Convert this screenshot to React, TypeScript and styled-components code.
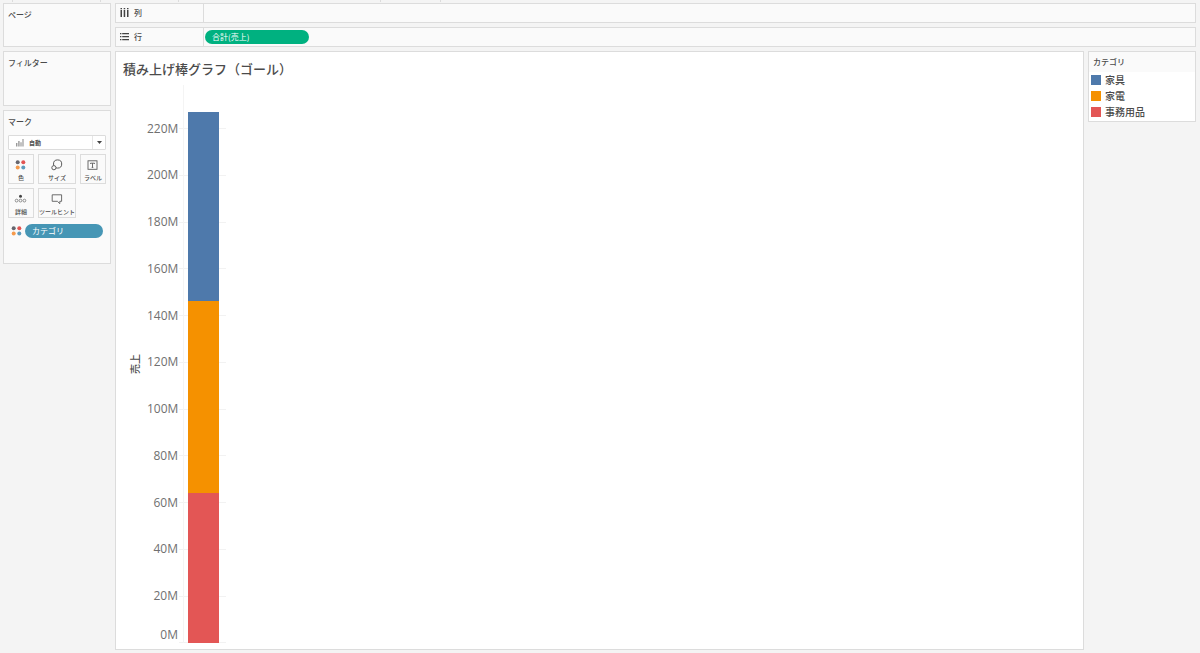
import React from 'react';
import styled, { createGlobalStyle } from 'styled-components';

const line = '#dcdcdc';
const panelBg = '#fafafa';
const ink = '#4b4b4b';

const GlobalStyle = createGlobalStyle`
  * { box-sizing: border-box; }
  body {
    margin: 0;
    background: #f4f4f4;
    color: ${ink};
    font-family: 'Noto Sans CJK JP', 'Noto Sans', sans-serif;
  }
  h1, h2, ul, ol, p { margin: 0; padding: 0; font-weight: 500; list-style: none; }
  button, select { font-family: inherit; color: inherit; margin: 0; padding: 0; border: 0; background: none; }
`;

const Page = styled.div`
  display: flex;
  flex-direction: column;
  min-height: 100vh;
`;

const TopStrip = styled.div`
  display: grid;
  grid-template-columns: 13px 88px 78px 202px 60px 1fr;
  height: 3px;
  flex: none;
  padding-bottom: 1px;
`;

const StripCell = styled.span`
  border-right: 1px solid ${line};
  &:last-child { border-right: 0; }
`;

const Workspace = styled.div`
  flex: 1;
  display: grid;
  grid-template-columns: 108px 1fr;
  gap: 4px;
  padding: 0 4px 3px 3px;
`;

const Sidebar = styled.aside`
  display: flex;
  flex-direction: column;
  gap: 4px;
`;

const Panel = styled.section<{ $minHeight: number }>`
  min-height: ${(p) => p.$minHeight}px;
  padding: 5px 4px;
  border: 1px solid ${line};
  background: ${panelBg};
`;

const PanelTitle = styled.h2`
  font-size: 8px;
  line-height: 11px;
`;

const MarkType = styled.label`
  display: grid;
  grid-template-columns: 20px 1fr 13px;
  align-items: center;
  height: 15px;
  margin-top: 8px;
  border: 1px solid ${line};
  border-radius: 1px;
  background: #fff;
`;

const MarkSelect = styled.select`
  appearance: none;
  grid-area: 1 / 2 / 2 / 4;
  font-size: 6px;
  font-weight: 700;
  line-height: 13px;
  outline: none;
`;

const MarkIcon = styled.svg`
  justify-self: end;
  margin-right: 5px;
`;

const SelectArrow = styled.span`
  grid-area: 1 / 3;
  display: flex;
  align-items: center;
  justify-content: center;
  height: 100%;
  border-left: 1px solid #e6e6e6;
  pointer-events: none;
`;

const MarkGrid = styled.div`
  display: grid;
  grid-template-columns: 26px 38px 26px;
  gap: 4px;
  margin-top: 4px;
`;

const MarkButton = styled.button`
  display: flex;
  flex-direction: column;
  align-items: center;
  gap: 2px;
  height: 30px;
  padding-top: 3px;
  border: 1px solid ${line};
  background: ${panelBg};
  font-size: 6px;
  font-weight: 500;
  line-height: 8px;
  white-space: nowrap;
`;

const Encoding = styled.div`
  display: grid;
  grid-template-columns: 17px 1fr;
  align-items: center;
  margin-top: 6px;
  padding-right: 3px;
  svg { justify-self: center; }
`;

const Pill = styled.button<{ $color: string }>`
  height: 14px;
  padding: 0 7px;
  border-radius: 7px;
  background: ${(p) => p.$color};
  color: #fff;
  font-size: 8px;
  line-height: 14px;
  text-align: left;
`;

const ShelfPill = styled(Pill)`
  width: 104px;
`;

const Main = styled.main`
  display: flex;
  flex-direction: column;
  gap: 4px;
`;

const Shelf = styled.section`
  display: grid;
  grid-template-columns: 88px 1fr;
  height: 20px;
  border: 1px solid ${line};
  background: ${panelBg};
`;

const ShelfName = styled.h2`
  display: flex;
  align-items: center;
  gap: 5px;
  padding: 0 0 1px 4px;
  border-right: 1px solid ${line};
  font-size: 8px;
`;

const ShelfDrop = styled.div`
  display: flex;
  align-items: center;
  padding-left: 1px;
`;

const Content = styled.div`
  flex: 1;
  display: grid;
  grid-template-columns: 1fr 108px;
  gap: 4px;
`;

const Sheet = styled.section`
  display: flex;
  flex-direction: column;
  padding: 8px 7px 6px;
  border: 1px solid ${line};
  background: #fff;
`;

const SheetTitle = styled.h1`
  font-size: 13px;
  font-weight: 500;
  line-height: 18px;
`;

const Chart = styled.figure`
  flex: 1;
  display: grid;
  grid-template-columns: 24px 36px 5px 32px 6px;
  margin: 7px 0 0;
`;

const AxisTitle = styled.figcaption`
  grid-area: 1 / 1;
  align-self: center;
  justify-self: center;
  writing-mode: vertical-rl;
  text-orientation: sideways;
  transform: rotate(180deg);
  font-size: 10px;
  font-weight: 500;
  line-height: 14px;
`;

const AxisRows = styled.ol`
  grid-area: 1 / 2 / 2 / 6;
  display: grid;
  grid-template-rows: 20fr repeat(11, 46fr) 23fr;
`;

const AxisRow = styled.li<{ $base?: boolean }>`
  display: grid;
  grid-template-columns: 31px 1fr;
  column-gap: 1px;
  align-items: ${(p) => (p.$base ? 'end' : 'center')};
  min-height: 0;
  font-family: 'Open Sans', 'Noto Sans', sans-serif;
  font-size: 12px;
  font-weight: 400;
  line-height: 16px;
  color: #707070;
  text-align: right;
  &::after {
    content: '';
    height: 1px;
    background: #f2f2f2;
  }
`;

const Plot = styled.div`
  grid-area: 1 / 3 / 2 / 5;
  display: flex;
  flex-direction: column;
  padding-left: 4px;
  margin-right: 1px;
  border-left: 1px solid #f4f4f4;
`;

const Segment = styled.div<{ $share: number; $color?: string }>`
  flex: ${(p) => p.$share} 0 0;
  background: ${(p) => p.$color ?? 'transparent'};
`;

const Legend = styled.section`
  align-self: start;
  border: 1px solid ${line};
  background: #fff;
`;

const LegendTitle = styled.h2`
  padding: 0 4px;
  background: ${panelBg};
  font-size: 8px;
  line-height: 20px;
`;

const LegendItem = styled.li`
  display: flex;
  align-items: center;
  gap: 4px;
  height: 16px;
  padding-left: 2px;
  font-size: 10px;
  font-weight: 500;
  line-height: 16px;
`;

const LegendList = styled.ul`
  padding-bottom: 1px;
`;

const Swatch = styled.span<{ $color: string }>`
  width: 10px;
  height: 10px;
  background: ${(p) => p.$color};
`;

const ColorDots = () => (
  <svg width="14" height="14" viewBox="0 0 14 14" aria-hidden="true">
    <circle cx="3.7" cy="4.2" r="2" fill="#66666e" />
    <circle cx="9.3" cy="4.2" r="2" fill="#e25452" />
    <circle cx="3.7" cy="9.6" r="2" fill="#f59a4c" />
    <circle cx="9.3" cy="9.6" r="2" fill="#5f9bbd" />
  </svg>
);

const SizeIcon = () => (
  <svg width="14" height="14" viewBox="0 0 14 14" fill={panelBg} stroke="#5c5c5c" strokeWidth="1" aria-hidden="true">
    <circle cx="7.6" cy="6" r="4.1" />
    <circle cx="3.9" cy="9.7" r="2.1" />
  </svg>
);

const LabelIcon = () => (
  <svg width="14" height="14" viewBox="0 0 14 14" fill="none" stroke="#5c5c5c" strokeWidth="0.9" aria-hidden="true">
    <rect x="2" y="2.8" width="9" height="8.5" />
    <path d="M4.5 6V5.2h4V6M6.5 5.2v4.2M5.7 9.4h1.6" />
  </svg>
);

const DetailIcon = () => (
  <svg width="14" height="14" viewBox="0 0 14 14" fill="none" stroke="#777" strokeWidth="0.8" aria-hidden="true">
    <circle cx="6.5" cy="4.3" r="1.5" fill="#444" stroke="none" />
    <circle cx="2.6" cy="8.6" r="1.4" />
    <circle cx="6.5" cy="8.6" r="1.4" />
    <circle cx="10.4" cy="8.6" r="1.4" />
  </svg>
);

const TooltipIcon = () => (
  <svg width="14" height="14" viewBox="0 0 14 14" fill="none" stroke="#5c5c5c" strokeWidth="0.9" aria-hidden="true">
    <path d="M2.2 2.8h9.4v6.5H9.8v2.4L7.4 9.3H2.2z" />
  </svg>
);

const ColumnsIcon = () => (
  <svg width="9" height="9" viewBox="0 0 9 9" fill="#444" aria-hidden="true">
    <path d="M.5 0H2v1.3H.5zM.5 2H2v7H.5zM3.7 0h1.5v1.3H3.7zM3.7 2h1.5v7H3.7zM7 0h1.5v1.3H7zM7 2h1.5v7H7z" />
  </svg>
);

const RowsIcon = () => (
  <svg width="9" height="9" viewBox="0 0 9 9" fill="#444" aria-hidden="true">
    <path d="M0 1h1.4v1.2H0zM2.2 1H9v1.2H2.2zM0 4h1.4v1.2H0zM2.2 4H9v1.2H2.2zM0 7h1.4v1.2H0zM2.2 7H9v1.2H2.2z" />
  </svg>
);

const marks = [
  { name: '色', icon: <ColorDots /> },
  { name: 'サイズ', icon: <SizeIcon /> },
  { name: 'ラベル', icon: <LabelIcon /> },
  { name: '詳細', icon: <DetailIcon /> },
  { name: 'ツールヒント', icon: <TooltipIcon /> },
];

const AXIS_MAX = 238.7;
const categories = [
  { name: '家具', value: 81.2, color: '#4e79ab' },
  { name: '家電', value: 82.1, color: '#f59100' },
  { name: '事務用品', value: 64, color: '#e35655' },
];
const total = categories.reduce((sum, c) => sum + c.value, 0);
const ticks = [220, 200, 180, 160, 140, 120, 100, 80, 60, 40, 20];

export default function App() {
  return (
    <Page>
      <GlobalStyle />
      <TopStrip aria-hidden="true">
        {[0, 1, 2, 3, 4, 5].map((n) => <StripCell key={n} />)}
      </TopStrip>
      <Workspace>
        <Sidebar>
          <Panel $minHeight={44}><PanelTitle>ページ</PanelTitle></Panel>
          <Panel $minHeight={55}><PanelTitle>フィルター</PanelTitle></Panel>
          <Panel $minHeight={154}>
            <PanelTitle>マーク</PanelTitle>
            <MarkType>
              <MarkIcon width="8" height="9" viewBox="0 0 8 9" fill="#999" aria-hidden="true">
                <path d="M0 5h1.4v3.5H0zM2.2 3h1.4v5.5H2.2zM4.4 4.2h1.2v4.3H4.4zM6.4 1h1.2v7.5H6.4z" />
              </MarkIcon>
              <MarkSelect aria-label="マークタイプ" defaultValue="auto">
                <option value="auto">自動</option>
              </MarkSelect>
              <SelectArrow>
                <svg width="5" height="3" viewBox="0 0 5 3" fill="#444" aria-hidden="true"><path d="M0 0h5L2.5 3z" /></svg>
              </SelectArrow>
            </MarkType>
            <MarkGrid>
              {marks.map((m) => (
                <MarkButton key={m.name} type="button">{m.icon}{m.name}</MarkButton>
              ))}
            </MarkGrid>
            <Encoding>
              <ColorDots />
              <Pill type="button" $color="#4696b5">カテゴリ</Pill>
            </Encoding>
          </Panel>
        </Sidebar>
        <Main>
          <Shelf>
            <ShelfName><ColumnsIcon />列</ShelfName>
            <ShelfDrop />
          </Shelf>
          <Shelf>
            <ShelfName><RowsIcon />行</ShelfName>
            <ShelfDrop><ShelfPill type="button" $color="#00b180">合計(売上)</ShelfPill></ShelfDrop>
          </Shelf>
          <Content>
            <Sheet>
              <SheetTitle>積み上げ棒グラフ（ゴール）</SheetTitle>
              <Chart>
                <AxisTitle>売上</AxisTitle>
                <AxisRows>
                  <li aria-hidden="true" />
                  {ticks.map((t) => <AxisRow key={t}>{t}M</AxisRow>)}
                  <AxisRow $base>0M</AxisRow>
                </AxisRows>
                <Plot>
                  <Segment $share={AXIS_MAX - total} />
                  {categories.map((c) => (
                    <Segment key={c.name} $share={c.value} $color={c.color} />
                  ))}
                </Plot>
              </Chart>
            </Sheet>
            <Legend>
              <LegendTitle>カテゴリ</LegendTitle>
              <LegendList>
                {categories.map((c) => (
                  <LegendItem key={c.name}><Swatch $color={c.color} />{c.name}</LegendItem>
                ))}
              </LegendList>
            </Legend>
          </Content>
        </Main>
      </Workspace>
    </Page>
  );
}
